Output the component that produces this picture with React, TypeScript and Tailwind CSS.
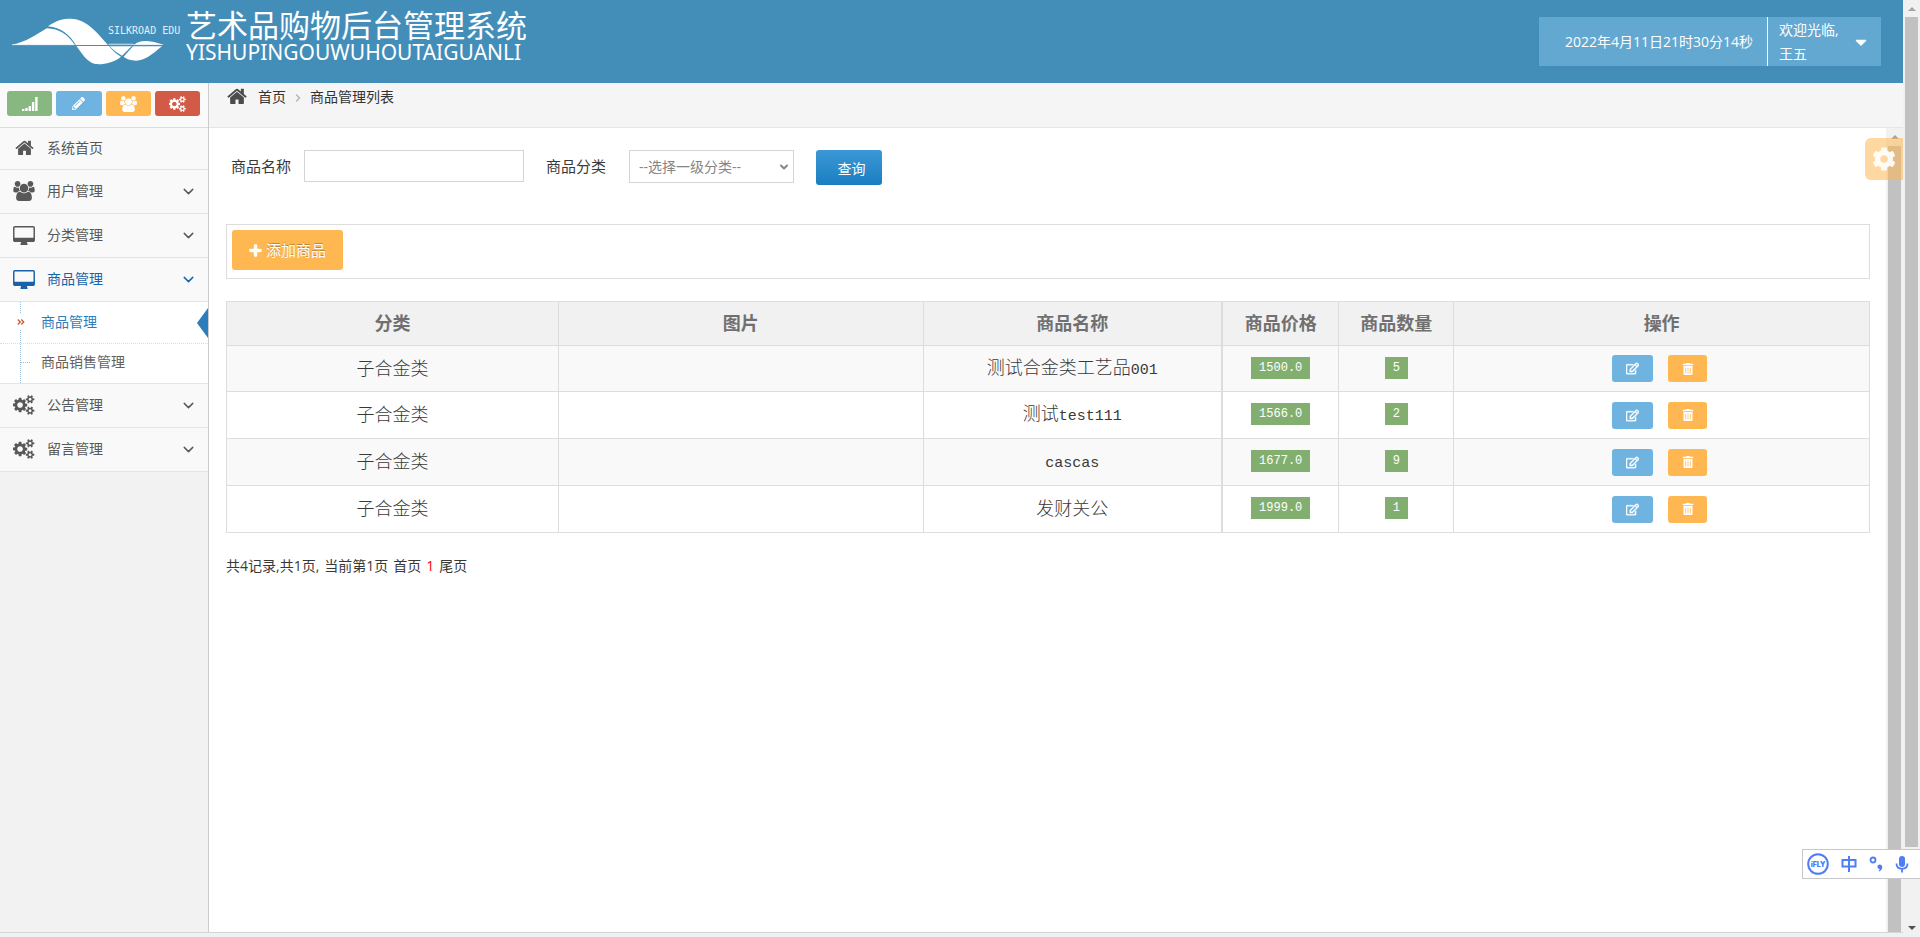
import React from 'react';
import { FaAngleDoubleRight, FaCaretDown, FaCog, FaPencilAlt, FaPlus, FaRegEdit, FaTrashAlt } from 'react-icons/fa';
import { ChevronDown, ChevronRight } from 'lucide-react';

type IconProps = { className?: string };

const HomeIcon = ({ className }: IconProps) => (
  <svg viewBox="64 192 1664 1344" className={className} fill="currentColor" aria-hidden="true">
    <path d="M1472 992v480q0 26-19 45t-45 19h-384v-384h-256v384h-384q-26 0-45-19t-19-45v-480q0-1 .5-3t.5-3l575-474 575 474q1 2 1 6zm223-69l-62 74q-8 9-21 11h-3q-13 0-21-7l-692-577-692 577q-12 8-24 7-13-2-21-11l-62-74q-8-10-7-23.5t11-21.5l719-599q32-26 76-26t76 26l244 204v-195q0-14 9-23t23-9h192q14 0 23 9t9 23v408l219 182q10 8 11 21.5t-7 23.5z" />
  </svg>
);

const UsersIcon = ({ className }: IconProps) => (
  <svg viewBox="64 0 1920 1792" className={className} fill="currentColor" aria-hidden="true">
    <path d="M657 896q-162 5-265 128h-134q-82 0-138-40.5t-56-118.5q0-353 124-353 6 0 43.5 21t97.5 42.5 119 21.5q67 0 133-23-5 37-5 66 0 139 81 256zm1071 637q0 120-73 189.5t-194 69.5h-874q-121 0-194-69.5t-73-189.5q0-53 3.5-103.5t14-109 26.5-108.5 43-97.5 62-81 85.5-53.5 111.5-20q10 0 43 21.5t73 48 107 48 135 21.5 135-21.5 107-48 73-48 43-21.5q61 0 111.5 20t85.5 53.5 62 81 43 97.5 26.5 108.5 14 109 3.5 103.5zm-1024-1277q0 106-75 181t-181 75-181-75-75-181 75-181 181-75 181 75 75 181zm704 384q0 159-112.5 271.5t-271.5 112.5-271.5-112.5-112.5-271.5 112.5-271.5 271.5-112.5 271.5 112.5 112.5 271.5zm576 225q0 78-56 118.5t-138 40.5h-134q-103-123-265-128 81-117 81-256 0-29-5-66 66 23 133 23 59 0 119-21.5t97.5-42.5 43.5-21q124 0 124 353zm-128-609q0 106-75 181t-181 75-181-75-75-181 75-181 181-75 181 75 75 181z" />
  </svg>
);

const DesktopIcon = ({ className }: IconProps) => (
  <svg viewBox="-64 0 1920 1664" className={className} fill="currentColor" aria-hidden="true">
    <path d="M1728 992v-832q0-13-9.5-22.5t-22.5-9.5h-1600q-13 0-22.5 9.5t-9.5 22.5v832q0 13 9.5 22.5t22.5 9.5h1600q13 0 22.5-9.5t9.5-22.5zm128-832v1088q0 66-47 113t-113 47h-544q0 37 16 77.5t32 71 16 43.5q0 26-19 45t-45 19h-512q-26 0-45-19t-19-45q0-14 16-44t32-70 16-78h-544q-66 0-113-47t-47-113v-1088q0-66 47-113t113-47h1600q66 0 113 47t47 113z" />
  </svg>
);

const CogsIcon = ({ className }: IconProps) => (
  <svg viewBox="-16 0 1888 1792" className={className} fill="currentColor" aria-hidden="true">
    <path d="M832 896q0-106-75-181t-181-75-181 75-75 181 75 181 181 75 181-75 75-181zm768 512q0-52-38-90t-90-38-90 38-38 90q0 53 37.5 90.5t90.5 37.5 90.5-37.5 37.5-90.5zm0-1024q0-52-38-90t-90-38-90 38-38 90q0 53 37.5 90.5t90.5 37.5 90.5-37.5 37.5-90.5zm-384 421v185q0 10-7 19.5t-16 10.5l-155 24q-11 35-32 76 34 48 90 115 7 11 7 20 0 12-7 19-23 30-82.5 89.5t-78.5 59.5q-11 0-21-7l-115-90q-37 19-77 31-11 108-23 155-7 24-30 24h-186q-11 0-20-7.5t-10-17.5l-23-153q-34-10-75-31l-118 89q-7 7-20 7-11 0-21-8-144-133-144-160 0-9 7-19 10-14 41-53t47-61q-23-44-35-82l-152-24q-10-1-17-9.5t-7-19.5v-185q0-10 7-19.5t16-10.5l155-24q11-35 32-76-34-48-90-115-7-11-7-20 0-12 7-20 22-30 82-89t79-59q11 0 21 7l115 90q34-18 77-32 11-108 23-154 7-24 30-24h186q11 0 20 7.5t10 17.5l23 153q34 10 75 31l118-89q8-7 20-7 11 0 21 8 144 133 144 160 0 8-7 19-12 16-42 54t-45 60q23 48 34 82l152 23q10 2 17 10.5t7 19.5zm640 533v140q0 16-149 31-12 27-30 52 51 113 51 138 0 4-4 7-122 71-124 71-8 0-46-47t-52-68q-20 2-30 2t-30-2q-14 21-52 68t-46 47q-2 0-124-71-4-3-4-7 0-25 51-138-18-25-30-52-149-15-149-31v-140q0-16 149-31 13-29 30-52-51-113-51-138 0-4 4-7 4-2 35-20t59-34 30-16q8 0 46 46.5t52 67.5q20-2 30-2t30 2q51-71 92-112l6-2q4 0 124 70 4 3 4 7 0 25-51 138 17 23 30 52 149 15 149 31zm0-1024v140q0 16-149 31-12 27-30 52 51 113 51 138 0 4-4 7-122 71-124 71-8 0-46-47t-52-68q-20 2-30 2t-30-2q-14 21-52 68t-46 47q-2 0-124-71-4-3-4-7 0-25 51-138-18-25-30-52-149-15-149-31v-140q0-16 149-31 13-29 30-52-51-113-51-138 0-4 4-7 4-2 35-20t59-34 30-16q8 0 46 46.5t52 67.5q20-2 30-2t30 2q51-71 92-112l6-2q4 0 124 70 4 3 4 7 0 25-51 138 17 23 30 52 149 15 149 31z" />
  </svg>
);

const SignalIcon = ({ className }: IconProps) => (
  <svg viewBox="0 0 16 14" className={className} fill="currentColor" aria-hidden="true">
    <path d="M0 12h2.4v2H0zM3.3 11h2.4v3H3.3zM6.6 9H9v5H6.6zM9.9 5h2.4v9H9.9zM13.2 0h2.4v14h-2.4z" />
  </svg>
);

const Logo = () => (
  <svg viewBox="12 12 456 144" className="h-12 w-[152px]" aria-hidden="true">
    <g fill="#fff">
      <path d="M12 92C55 84 85 62 116 43C155 44 178 62 200 92Z" />
      <path d="M120 37C145 19 165 14 188 14C240 16 270 60 302 95C315 110 325 120 339 128C315 148 285 152 262 150C235 143 222 118 205 95C185 62 160 40 120 37Z" />
      <path d="M305 97H371L342 125C328 117 316 109 305 97Z" />
      <path d="M379 92C395 79 415 76 465 92Z" />
      <path d="M375 97H462C430 123 410 140 385 140C367 139 354 134 347 128Z" />
    </g>
    <path d="M12 92H200M302 92H465" stroke="#fff" strokeWidth="2" />
    <path d="M204 94.500H466" stroke="#438eb9" strokeWidth="3" />
    <path d="M302 90H376" stroke="#b7d4e6" strokeWidth="2" />
  </svg>
);

type NavItem = { label: string; icon: React.ReactNode; active?: boolean; children?: string[] };

const nav: NavItem[] = [
  { label: '用户管理', icon: <UsersIcon className="h-5 w-[22px]" /> },
  { label: '分类管理', icon: <DesktopIcon className="h-[19px] w-[22px]" /> },
  { label: '商品管理', icon: <DesktopIcon className="h-[19px] w-[22px]" />, active: true, children: ['商品管理', '商品销售管理'] },
  { label: '公告管理', icon: <CogsIcon className="h-5 w-[22px]" /> },
  { label: '留言管理', icon: <CogsIcon className="h-5 w-[22px]" /> },
];

const shortcuts = [
  { label: '统计', color: 'bg-[#87b87f]', icon: <SignalIcon className="h-3.5 w-4" /> },
  { label: '编辑', color: 'bg-[#6fb3e0]', icon: <FaPencilAlt className="size-[13px]" /> },
  { label: '用户', color: 'bg-[#ffb752]', icon: <UsersIcon className="h-4 w-[17px]" /> },
  { label: '设置', color: 'bg-[#d15b47]', icon: <CogsIcon className="h-4 w-[17px]" /> },
];

const rows = [
  { cjk: '测试合金类工艺品', latin: '001', price: '1500.0', qty: '5' },
  { cjk: '测试', latin: 'test111', price: '1566.0', qty: '2' },
  { cjk: '', latin: 'cascas', price: '1677.0', qty: '9' },
  { cjk: '发财关公', latin: '', price: '1999.0', qty: '1' },
];

function Header() {
  return (
    <header className="flex h-[83px] shrink-0 items-start justify-between bg-[#438eb9] pr-[22px] text-white">
      <div className="flex pl-3">
        <div className="relative pt-[18px]">
          <Logo />
          <span className="absolute left-24 top-6 whitespace-nowrap font-['DejaVu_Sans_Mono',monospace] text-[10px] leading-[14px] text-[#e3eff6]">SILKROAD EDU</span>
        </div>
        <h1 className="ml-[22px] flex flex-col pt-2 whitespace-nowrap">
          <span className="text-[31px] leading-[34px]">艺术品购物后台管理系统</span>
          <span className="font-['Noto_Sans',sans-serif] text-[21px] leading-5">YISHUPINGOUWUHOUTAIGUANLI</span>
        </h1>
      </div>
      <div className="mt-[17px] flex h-[49px] bg-[#62a8d1] text-sm">
        <time className="flex w-[229px] items-center justify-end border-r border-white pr-[14px] whitespace-nowrap">2022年4月11日21时30分14秒</time>
        <button type="button" className="flex w-[113px] items-center justify-between pl-[11px] pr-[11px] text-left">
          <span className="leading-6">欢迎光临,<br />王五</span>
          <FaCaretDown className="size-[18px]" />
        </button>
      </div>
    </header>
  );
}

function Sidebar() {
  return (
    <aside className="w-[209px] shrink-0 border-r border-[#ccc] bg-[#f2f2f2] text-sm text-[#585858]">
      <div className="flex h-[45px] gap-1 border-b border-[#ddd] bg-[#fafafa] pl-[7px] pr-2 pt-2">
        {shortcuts.map((s) => (
          <button key={s.label} type="button" aria-label={s.label} className={`flex h-[25px] flex-1 items-center justify-center rounded-[3px] text-white ${s.color}`}>
            {s.icon}
          </button>
        ))}
      </div>
      <nav>
        <ul>
          <li className="h-[42px] border-b border-[#e5e5e5] bg-[#f9f9f9]">
            <a href="#home" className="flex h-full items-center pb-0.5 pl-[13px]">
              <span className="flex w-[34px] pl-[2px]"><HomeIcon className="h-[15px] w-[19px]" /></span>
              系统首页
            </a>
          </li>
          {nav.map((item) => (
            <li key={item.label}>
              <a href="#menu" className={`flex h-11 items-center border-b border-[#e5e5e5] bg-[#f9f9f9] pb-px pl-[13px] pr-[11px] ${item.active ? 'text-[#1963aa]' : ''}`}>
                <span className="flex w-[34px]">{item.icon}</span>
                <span className="flex-1">{item.label}</span>
                <ChevronDown className="size-[17px]" strokeWidth={2} />
              </a>
              {item.children && (
                <ul className="relative border-b border-[#e5e5e5] bg-white">
                  <li className="absolute inset-y-0 left-5 border-l border-dotted border-[#9dbdd6]" aria-hidden="true" />
                  <li className="relative">
                    <a href="#goods" className="flex h-[42px] items-center border-b border-dotted border-[#ddd] pb-0.5 text-[#2b7dbc]">
                      <span className="flex w-[41px] items-center pl-[17px]"><FaAngleDoubleRight className="h-4 w-2 bg-white text-[#c86139]" /></span>
                      {item.children[0]}
                    </a>
                    <svg viewBox="0 0 11 30" className="absolute right-0 top-[6px] h-[30px] w-[11px]" aria-hidden="true"><path d="M11 0v30L0 15z" fill="#2b7dbc" /></svg>
                  </li>
                  <li>
                    <a href="#sales" className="flex h-[39px] items-center pb-[3px] text-[#616161]">
                      <span className="flex w-[41px] pl-[21px]"><span className="w-[9px] border-t border-dotted border-[#9dbdd6]" /></span>
                      {item.children[1]}
                    </a>
                  </li>
                </ul>
              )}
            </li>
          ))}
        </ul>
      </nav>
    </aside>
  );
}

function GoodsTable() {
  const cell = 'border border-[#ddd]';
  return (
    <table className="mt-[22px] w-full table-fixed border-collapse text-center">
      <colgroup>
        <col className="w-[20.2%]" />
        <col className="w-[22.2%]" />
        <col className="w-[18.2%]" />
        <col className="w-[7.1%]" />
        <col className="w-[7%]" />
        <col />
      </colgroup>
      <thead>
        <tr className="h-11 bg-[#f1f1f1] text-lg text-[#707070]">
          {['分类', '图片', '商品名称', '商品价格', '商品数量', '操作'].map((h) => (
            <th key={h} scope="col" className={`${cell} pb-0.5 font-bold ${h === '商品名称' ? 'border-r-2' : ''}`}>{h}</th>
          ))}
        </tr>
      </thead>
      <tbody>
        {rows.map((r) => (
          <tr key={r.price} className="h-[47px] text-lg font-light text-[#393939] first:h-[46px] odd:bg-[#f9f9f9]">
            <td className={`${cell} pb-0.5`}>子合金类</td>
            <td className={cell} />
            <td className={`${cell} border-r-2 pb-0.5`}>
              {r.cjk}
              {r.latin && <span className="font-['Liberation_Mono',monospace] text-[15px] font-normal">{r.latin}</span>}
            </td>
            {[r.price, r.qty].map((v) => (
              <td key={v} className={`${cell} pb-0.5`}>
                <div className="flex justify-center">
                  <span className="bg-[#82af6f] px-2 font-['Liberation_Mono',monospace] text-xs leading-[22px] font-normal text-white">{v}</span>
                </div>
              </td>
            ))}
            <td className={cell}>
              <div className="flex items-center justify-center gap-[15px] pr-1 text-white">
                <button type="button" aria-label="编辑" className="flex h-[27px] w-[41px] items-center justify-center rounded-[3px] bg-[#6fb3e0]"><FaRegEdit className="size-[13px]" strokeWidth={16} /></button>
                <button type="button" aria-label="删除" className="flex h-[27px] w-[39px] items-center justify-center rounded-[3px] bg-[#ffb752]"><FaTrashAlt className="size-3" /></button>
              </div>
            </td>
          </tr>
        ))}
      </tbody>
    </table>
  );
}

function Content() {
  return (
    <section className="min-w-0 flex-1 bg-white pl-[17px] pr-4 pt-[22px] text-[#393939]">
      <form className="flex items-start pl-[5px] text-[15px]" onSubmit={(e) => e.preventDefault()}>
        <label htmlFor="goods-name" className="leading-8">商品名称</label>
        <input id="goods-name" type="text" className="ml-[13px] h-8 w-[220px] border border-[#d5d5d5] px-2" />
        <label htmlFor="goods-type" className="ml-[22px] leading-8">商品分类</label>
        <div className="relative ml-[23px] flex items-center text-[#858585]">
          <select id="goods-type" className="h-[33px] w-[165px] appearance-none border border-[#d5d5d5] bg-white pl-[9px] text-sm">
            <option>--选择一级分类--</option>
          </select>
          <ChevronDown className="pointer-events-none absolute right-1 size-3" strokeWidth={4} />
        </div>
        <button type="submit" className="ml-[22px] h-[35px] w-[66px] rounded-[3px] bg-linear-to-b from-[#3b98d6] to-[#197ec1] pl-[5px] pt-0.5 text-sm text-white">查询</button>
      </form>
      <div className="mt-[39px] flex h-[55px] border border-[#ddd] p-[5px]">
        <button type="button" className="flex h-10 w-[111px] items-center justify-center gap-1 rounded-[3px] bg-[#ffb752] text-[15px] text-white [text-shadow:0_-1px_0_rgba(0,0,0,0.25)]">
          <FaPlus className="size-[13px]" strokeWidth={40} />添加商品
        </button>
      </div>
      <GoodsTable />
      <p className="mt-[21px] flex gap-[5px] text-sm leading-6">
        <span>共4记录,共1页,</span>
        <span>当前第1页</span>
        <a href="#first">首页</a>
        <span className="text-[#f00]">1</span>
        <a href="#last">尾页</a>
      </p>
    </section>
  );
}

const Arrow = ({ down, className }: { down?: boolean; className?: string }) => (
  <svg viewBox="0 0 8 4" className={`h-1 w-2 ${className}`} fill="currentColor" aria-hidden="true">
    <path d={down ? 'M0 0h8L4 4z' : 'M0 4h8L4 0z'} />
  </svg>
);

function InputMethodBar() {
  return (
    <div className="absolute bottom-[58px] right-0 flex h-[30px] w-[118px] items-center border border-r-0 border-[#c8c8cc] bg-white pl-1 text-[#4f7df5]">
      <svg viewBox="0 0 22 22" className="size-[22px]" aria-hidden="true">
        <circle cx="11" cy="11" r="9.800" fill="none" stroke="currentColor" strokeWidth="2" />
        <text x="11" y="13.500" textAnchor="middle" fontSize="7" fontWeight="900" fontFamily="Inter, sans-serif" fill="currentColor">iFLY</text>
      </svg>
      <svg viewBox="0 0 16 16" className="ml-3 size-4" fill="none" stroke="currentColor" strokeWidth="2" aria-hidden="true">
        <path d="M1.500 4h13v6.500h-13zM8 0v16" />
      </svg>
      <svg viewBox="0 0 14 16" className="ml-3 h-4 w-3.5" aria-hidden="true">
        <circle cx="4" cy="4" r="2.500" fill="none" stroke="currentColor" strokeWidth="1.800" />
        <path d="M10.500 8.500a2.500 2.500 0 0 1 2.700 2.800c0 2-1.300 3.500-3 4.200l-.6-.9c.8-.5 1.200-.9 1.300-1.500a2.300 2.300 0 1 1-.4-4.600z" fill="currentColor" />
      </svg>
      <svg viewBox="0 0 14 18" className="ml-3 h-[18px] w-3.5" aria-hidden="true">
        <rect x="4" y="1" width="6" height="11" rx="3" fill="currentColor" />
        <path d="M1.500 8.500c0 3.500 2.500 5.300 5.500 5.300s5.500-1.800 5.500-5.300M7 14v3.500" fill="none" stroke="currentColor" strokeWidth="1.800" />
      </svg>
    </div>
  );
}

export default function App() {
  return (
    <div className="relative flex min-h-screen bg-[#f1f1f1] font-['Open_Sans','Noto_Sans_CJK_SC',sans-serif]">
      <div className="flex min-w-0 flex-1 flex-col">
        <Header />
        <div className="flex flex-1 border-b border-[#d5d5d5]">
          <Sidebar />
          <div className="relative flex min-w-0 flex-1 flex-col">
            <div className="flex h-[45px] items-start border-b border-[#e5e5e5] bg-[#f5f5f5] pl-[18px] pt-0.5 text-sm leading-6 text-[#333]">
              <HomeIcon className="mt-[3px] h-4 w-5 text-[#4c4c4c]" />
              <a href="#home" className="ml-[11px]">首页</a>
              <ChevronRight className="mx-1.5 mt-[7px] size-3 text-[#b2b6bf]" strokeWidth={3} />
              <span>商品管理列表</span>
            </div>
            <div className="flex flex-1">
              <Content />
              <div className="flex w-[17px] flex-col items-center bg-[#f1f1f1]" aria-hidden="true">
                <Arrow className="my-[7px] text-[#a3a3a3]" />
                <div className="w-[13px] flex-1 bg-[#c1c1c1]" />
              </div>
            </div>
            <button type="button" aria-label="设置" className="absolute right-0 top-[55px] flex h-[42px] w-[38px] items-center justify-center rounded-l-md bg-[#ffb752]/55 text-white">
              <FaCog className="size-6 opacity-90" />
            </button>
          </div>
        </div>
        <div className="h-1 shrink-0" />
      </div>
      <div className="flex w-[17px] shrink-0 flex-col items-center bg-[#f1f1f1]" aria-hidden="true">
        <Arrow className="mb-1.5 mt-[7px] text-[#a3a3a3]" />
        <div className="w-[13px] flex-1 bg-[#c1c1c1]" />
        <Arrow down className="mb-[7px] mt-[79px] text-[#505050]" />
      </div>
      <InputMethodBar />
    </div>
  );
}
